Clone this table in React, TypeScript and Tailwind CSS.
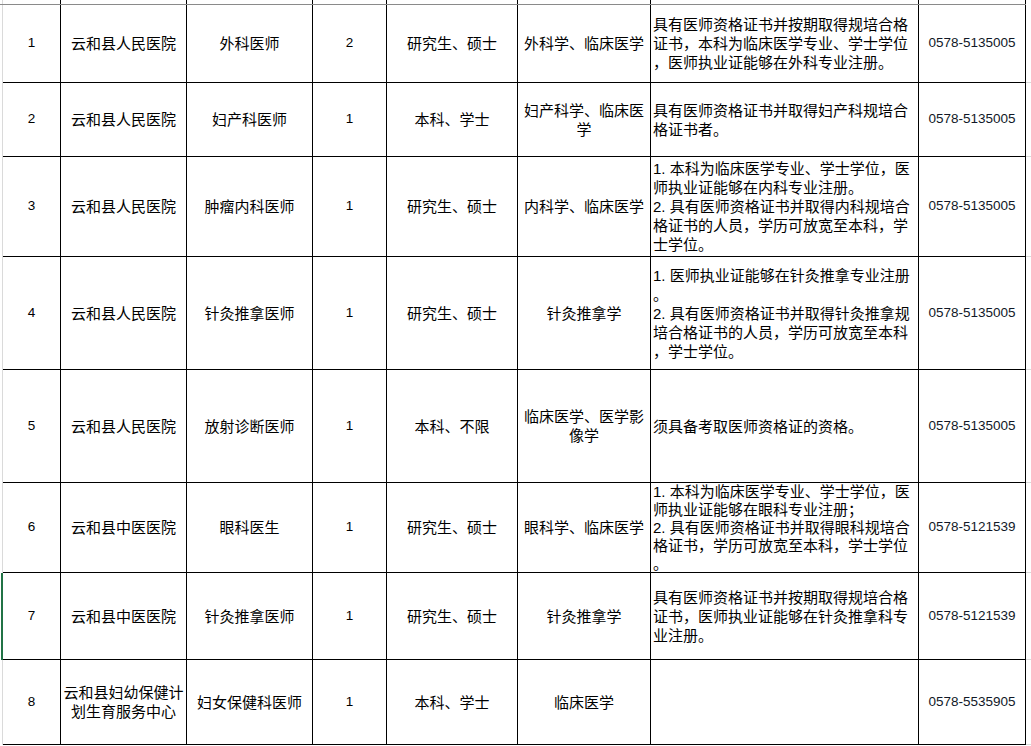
import React from "react";

type Row = {
  no: string;
  org: string[];
  pos: string[];
  n: string;
  edu: string[];
  major: string[];
  desc: string[];
  tel: string;
  h: string;
  sel?: boolean;
  top?: boolean;
};

const rows: Row[] = [
  {
    no: "1",
    org: ["云和县人民医院"],
    pos: ["外科医师"],
    n: "2",
    edu: ["研究生、硕士"],
    major: ["外科学、临床医学"],
    desc: [
      "具有医师资格证书并按期取得规培合格",
      "证书，本科为临床医学专业、学士学位",
      "，医师执业证能够在外科专业注册。",
    ],
    tel: "0578-5135005",
    h: "h-[78px]",
  },
  {
    no: "2",
    org: ["云和县人民医院"],
    pos: ["妇产科医师"],
    n: "1",
    edu: ["本科、学士"],
    major: ["妇产科学、临床医", "学"],
    desc: ["具有医师资格证书并取得妇产科规培合", "格证书者。"],
    tel: "0578-5135005",
    h: "h-[74px]",
  },
  {
    no: "3",
    org: ["云和县人民医院"],
    pos: ["肿瘤内科医师"],
    n: "1",
    edu: ["研究生、硕士"],
    major: ["内科学、临床医学"],
    desc: [
      "1. 本科为临床医学专业、学士学位，医",
      "师执业证能够在内科专业注册。",
      "2. 具有医师资格证书并取得内科规培合",
      "格证书的人员，学历可放宽至本科，学",
      "士学位。",
    ],
    tel: "0578-5135005",
    h: "h-[100px]",
  },
  {
    no: "4",
    org: ["云和县人民医院"],
    pos: ["针灸推拿医师"],
    n: "1",
    edu: ["研究生、硕士"],
    major: ["针灸推拿学"],
    desc: [
      "1. 医师执业证能够在针灸推拿专业注册",
      "。",
      "2. 具有医师资格证书并取得针灸推拿规",
      "培合格证书的人员，学历可放宽至本科",
      "，学士学位。",
    ],
    tel: "0578-5135005",
    h: "h-[113px]",
  },
  {
    no: "5",
    org: ["云和县人民医院"],
    pos: ["放射诊断医师"],
    n: "1",
    edu: ["本科、不限"],
    major: ["临床医学、医学影", "像学"],
    desc: ["须具备考取医师资格证的资格。"],
    tel: "0578-5135005",
    h: "h-[113px]",
  },
  {
    no: "6",
    org: ["云和县中医医院"],
    pos: ["眼科医生"],
    n: "1",
    edu: ["研究生、硕士"],
    major: ["眼科学、临床医学"],
    desc: [
      "1. 本科为临床医学专业、学士学位，医",
      "师执业证能够在眼科专业注册；",
      "2. 具有医师资格证书并取得眼科规培合",
      "格证书，学历可放宽至本科，学士学位",
      "。",
    ],
    tel: "0578-5121539",
    h: "h-[90px]",
    top: true,
  },
  {
    no: "7",
    org: ["云和县中医医院"],
    pos: ["针灸推拿医师"],
    n: "1",
    edu: ["研究生、硕士"],
    major: ["针灸推拿学"],
    desc: [
      "具有医师资格证书并按期取得规培合格",
      "证书，医师执业证能够在针灸推拿科专",
      "业注册。",
    ],
    tel: "0578-5121539",
    h: "h-[87px]",
    sel: true,
  },
  {
    no: "8",
    org: ["云和县妇幼保健计", "划生育服务中心"],
    pos: ["妇女保健科医师"],
    n: "1",
    edu: ["本科、学士"],
    major: ["临床医学"],
    desc: [],
    tel: "0578-5535905",
    h: "h-[85px]",
  },
];

const cellBase =
  "shrink-0 h-full border-r border-b border-black flex items-center overflow-hidden";

function Lines({ lines }: { lines: string[] }) {
  return (
    <div className="whitespace-nowrap">
      {lines.map((l, i) => (
        <div key={i}>{l}</div>
      ))}
    </div>
  );
}

export default function App() {
  return (
    <div
      className="w-[1031px] h-[746px] overflow-hidden bg-white text-black"
      style={{ fontFamily: '"Liberation Sans", "Noto Sans CJK SC", sans-serif' }}
    >
      {/* top partial row */}
      <div className="flex w-[1026px] h-[5px] border-b border-[#8a8a8a]">
        <div className="w-[3px] shrink-0 h-full border-r border-[#dadada]" />
        <div className="w-[58px] shrink-0 h-full border-r border-black" />
        <div className="w-[126px] shrink-0 h-full border-r border-black" />
        <div className="w-[126px] shrink-0 h-full border-r border-black" />
        <div className="w-[74px] shrink-0 h-full border-r border-black" />
        <div className="w-[131px] shrink-0 h-full border-r border-black" />
        <div className="w-[133px] shrink-0 h-full border-r border-black" />
        <div className="w-[268px] shrink-0 h-full border-r border-black" />
        <div className="w-[107px] shrink-0 h-full border-r border-black" />
      </div>
      {rows.map((r) => (
        <div key={r.no} className={`flex ${r.h}`}>
          <div
            className={
              r.sel
                ? "w-[3px] shrink-0 h-full border-r-2 border-[#217346]"
                : "w-[3px] shrink-0 h-full border-r border-[#dadada]"
            }
          />
          <div className={`${cellBase} w-[58px] justify-center text-[13.5px]`}>
            {r.no}
          </div>
          <div
            className={`${cellBase} w-[126px] justify-center text-center text-[15px] leading-[19px]`}
          >
            <Lines lines={r.org} />
          </div>
          <div
            className={`${cellBase} w-[126px] justify-center text-center text-[15px] leading-[19px]`}
          >
            <Lines lines={r.pos} />
          </div>
          <div className={`${cellBase} w-[74px] justify-center text-[13.5px]`}>
            {r.n}
          </div>
          <div
            className={`${cellBase} w-[131px] justify-center text-center text-[15px] leading-[19px]`}
          >
            <Lines lines={r.edu} />
          </div>
          <div
            className={`${cellBase} w-[133px] justify-center text-center text-[15px] leading-[19px]`}
          >
            <Lines lines={r.major} />
          </div>
          <div
            className={
              r.top
                ? "shrink-0 h-full border-r border-b border-black flex items-start overflow-hidden w-[268px] justify-start pl-[2px] text-[15px] leading-[18px]"
                : `${cellBase} w-[268px] justify-start pl-[2px] text-[15px] leading-[19px]`
            }
          >
            <Lines lines={r.desc} />
          </div>
          <div
            className={`${cellBase} w-[107px] justify-center text-[13.5px] text-[#111827]`}
          >
            {r.tel}
          </div>
          <div className="w-[5px] shrink-0 h-full border-b border-[#dadada]" />
        </div>
      ))}
    </div>
  );
}
